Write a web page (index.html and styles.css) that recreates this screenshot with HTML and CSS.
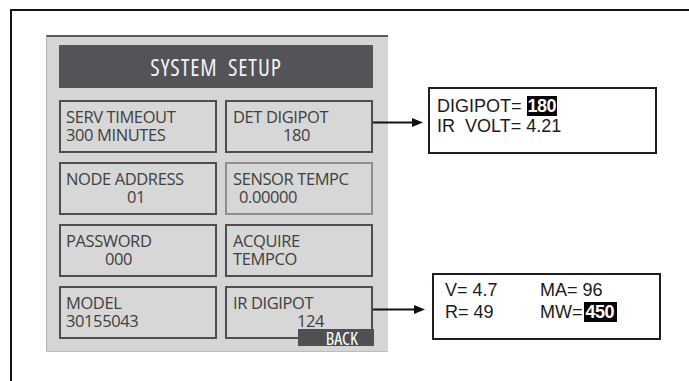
FILE: index.html
```html
<!DOCTYPE html>
<html lang="en">

<head>
    <meta charset="UTF-8">
    <meta name="viewport" content="width=device-width, initial-scale=1.0">
    <title>system setup</title>
    <link rel="stylesheet" href="styles.css">
</head>

<body>
    <div class="frame">
        <div class="panel">
            <div class="title">SYSTEM&nbsp; SETUP</div>

            <div class="grid">
                <div class="key">
                    <span>SERV TIMEOUT</span>
                    <span>300 MINUTES</span>
                </div>
                <div class="key key-r">
                    <span>DET DIGIPOT</span>
                    <span class="ind-180">180</span>
                </div>
                <div class="key">
                    <span>NODE ADDRESS</span>
                    <span class="ind-01">01</span>
                </div>
                <div class="key key-r faint">
                    <span>SENSOR TEMPC</span>
                    <span class="ind-tc">0.00000</span>
                </div>
                <div class="key">
                    <span>PASSWORD</span>
                    <span class="ind-pw">000</span>
                </div>
                <div class="key key-r">
                    <span>ACQUIRE</span>
                    <span>TEMPCO</span>
                </div>
                <div class="key">
                    <span>MODEL</span>
                    <span>30155043</span>
                </div>
                <div class="key key-r">
                    <span>IR DIGIPOT</span>
                    <span class="ind-124">124</span>
                    <div class="back">BACK</div>
                </div>
            </div>
        </div>

        <div class="callouts">
            <!-- DET DIGIPOT screen -->
            <div class="callout first">
                <svg class="arrow" width="51" height="11" viewBox="0 0 51 11">
                    <line x1="0" y1="5.5" x2="42" y2="5.5" stroke="#111" stroke-width="2" />
                    <polygon points="40,1 51,5.5 40,10" fill="#111" />
                </svg>
                <div class="readout">
                    <div>DIGIPOT= <span class="hl">180</span></div>
                    <div>IR&nbsp; VOLT= 4.21</div>
                </div>
            </div>

            <!-- IR DIGIPOT screen -->
            <div class="callout second">
                <svg class="arrow" width="52" height="11" viewBox="0 0 52 11">
                    <line x1="0" y1="5.5" x2="43" y2="5.5" stroke="#111" stroke-width="2" />
                    <polygon points="41,1 52,5.5 41,10" fill="#111" />
                </svg>
                <div class="readout readout-grid">
                    <div>V= 4.7</div>
                    <div>MA= 96</div>
                    <div>R= 49</div>
                    <div>MW=<span class="hl">450</span></div>
                </div>
            </div>
        </div>
    </div>
</body>

</html>
```

FILE: styles.css
```css
html,
body {
    margin: 0;
    height: 100%;
    overflow: hidden;
    background: #fff;
}

.frame {
    display: flex;
    align-items: flex-start;
    box-sizing: border-box;
    height: calc(100% - 9px);
    margin: 9px 0 0 10px;
    padding: 24px 0 0 34px;
    border-top: 2px solid #151515;
    border-left: 2px solid #151515;
}

.panel {
    flex: none;
    width: 314px;
    padding: 8px 15px 12px 12px;
    background: #d5d5d5;
    border-top: 2px solid #5a5a5a;
    border-left: 1px solid #b4b4b4;
    border-bottom: 1px solid #bcbcbc;
    font-family: "Open Sans", sans-serif;
    color: #404040;
}

.title {
    height: 43px;
    line-height: 44px;
    background: #545357;
    color: #f1f1f1;
    text-align: center;
    font-size: 23px;
    font-stretch: 80%;
    letter-spacing: 0.9px;
}

.grid {
    display: grid;
    grid-template-columns: 158px 148px;
    grid-auto-rows: 53px;
    column-gap: 8px;
    row-gap: 9px;
    margin-top: 12px;
}

.key {
    position: relative;
    display: flex;
    flex-direction: column;
    padding: 6px 5px 0 5px;
    background: #d7d7d7;
    border: 2px solid #4e4e4e;
    font-size: 16.5px;
    line-height: 18px;
    letter-spacing: -0.4px;
    white-space: nowrap;
}

.key-r {
    padding-left: 6px;
}

.faint {
    border-color: #8e8e8e;
}

.ind-180 {
    padding-left: 50px;
}

.ind-01 {
    padding-left: 61px;
}

.ind-tc {
    padding-left: 6px;
}

.ind-pw {
    padding-left: 39px;
}

.ind-124 {
    padding-left: 64px;
}

.back {
    position: absolute;
    right: -3px;
    bottom: -9px;
    width: 76px;
    height: 17px;
    box-sizing: border-box;
    padding-right: 16px;
    background: #505052;
    color: #fff;
    font-size: 18px;
    font-stretch: 80%;
    line-height: 19px;
    text-align: right;
    letter-spacing: 0;
}

.callouts {
    display: flex;
    flex-direction: column;
    margin-left: -16px;
}

.callout {
    display: flex;
    align-items: flex-start;
}

.first {
    margin-top: 52px;
}

.second {
    margin-top: 119px;
    margin-left: 1px;
}

.first .arrow {
    margin: 30px 5px 0 0;
}

.second .arrow {
    margin: 31px 7px 0 0;
}

.readout {
    width: 218px;
    height: 56px;
    padding: 7px 0 0 7px;
    border: 2px solid #1e1e1e;
    font-family: "Liberation Sans", Arial, sans-serif;
    font-size: 18px;
    line-height: 20px;
    color: #1b1b1b;
}

.readout-grid {
    display: grid;
    grid-template-columns: 95px auto;
    align-content: start;
    width: 214px;
    height: 59px;
    padding: 4px 0 0 11px;
    line-height: 22px;
}

.hl {
    padding: 0 1px;
    background: #050505;
    color: #fff;
    font-weight: bold;
    letter-spacing: -0.5px;
}

.readout-grid .hl {
    margin-left: 1px;
    padding: 0 3px 0 2px;
}
```
